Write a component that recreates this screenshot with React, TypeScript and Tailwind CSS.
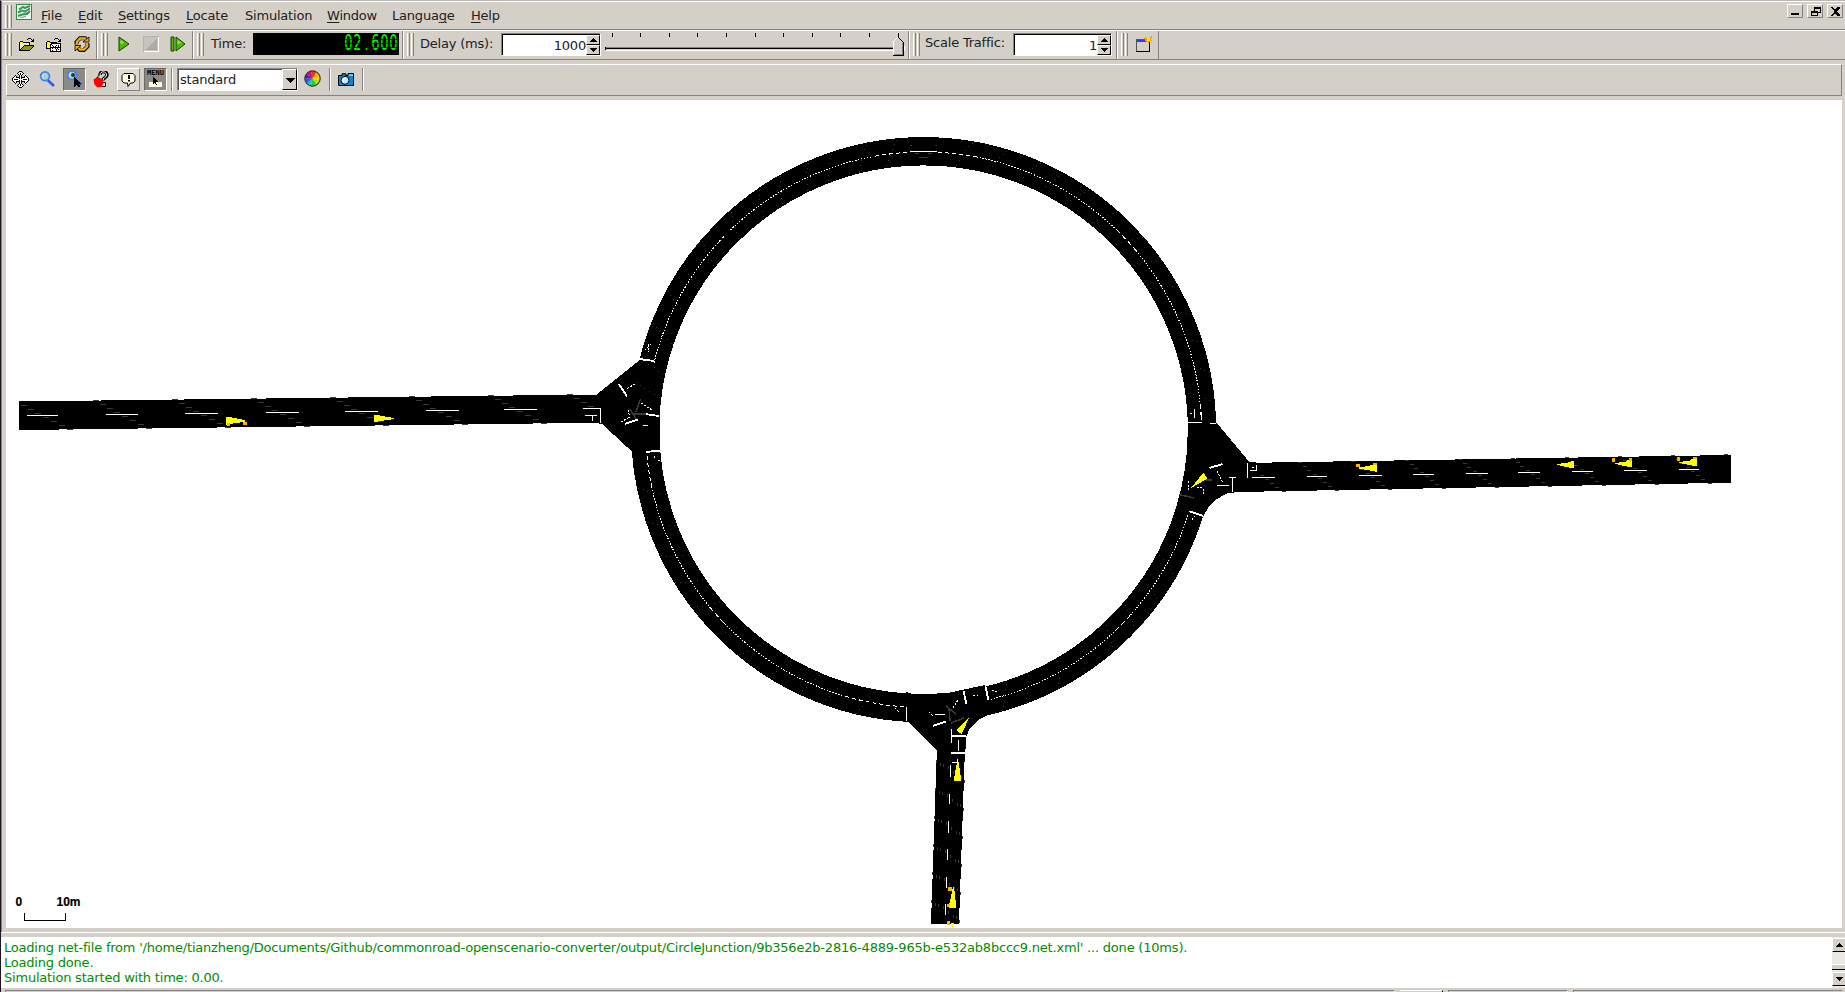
import React from "react";

type Pt = [number, number];

const BlackLine = "#000";
const DARK = "#3a3a3a";

function Grip({ className = "" }: { className?: string }) {
  return (
    <div className={`flex h-[23px] w-[7px] shrink-0 justify-between ${className}`}>
      <div className="w-[3px] border-l border-r border-l-white border-r-[#848284]" />
      <div className="w-[3px] border-l border-r border-l-white border-r-[#848284]" />
    </div>
  );
}

function Divider({ className = "" }: { className?: string }) {
  return <div className={`w-[2px] shrink-0 border-l border-r border-l-[#848284] border-r-white ${className}`} />;
}

function Pixels({ rows, colors, className = "" }: { rows: string[]; colors: Record<string, string>; className?: string }) {
  const w = Math.max(...rows.map((r) => r.length));
  return (
    <svg width={w} height={rows.length} viewBox={`0 0 ${w} ${rows.length}`} shapeRendering="crispEdges" className={`block shrink-0 ${className}`}>
      {rows.flatMap((r, y) =>
        r.split("").map((c, x) => (colors[c] ? <rect key={`${x}-${y}`} x={x} y={y} width="1" height="1" fill={colors[c]} /> : null)),
      )}
    </svg>
  );
}

const OPEN_ROWS = [
  "          ###   ",
  "         #   # #",
  "              ##",
  "  ###        ###",
  " #yyy#######    ",
  " #ywywywywy#    ",
  " #wywywywyw#    ",
  " #ywyw##########",
  " #wyw#ooooooooo#",
  " #yw#ooooooooo# ",
  " #w#ooooooooo#  ",
  " ##ooooooooo#   ",
  " ###########    ",
];
const NET_ROWS = [
  "          ###   ",
  "         #   # #",
  "              ##",
  "  ###        ###",
  " #yyy#######    ",
  " #ywyw##########",
  " #wyw##wwwwwwww#",
  " #ywy#w#www#w#w#",
  " #wyw#ww#w#ww#w#",
  " #ywy###########",
  " #####w#ww#w#ww#",
  "     #wwwww#w#w#",
  "     #w#www#www#",
  "     ###########",
];
const MOVE_ROWS = [
  "       ###       ",
  "      #www#      ",
  "     #ww#ww#     ",
  "      #w#w#      ",
  "   #   #w#   #   ",
  "  #w#  #w#  #w#  ",
  " #ww####w####ww# ",
  "#wwwwww#w#wwwwww#",
  "#w####wwwww####w#",
  "#wwwwww#w#wwwwww#",
  " #ww####w####ww# ",
  "  #w#  #w#  #w#  ",
  "   #   #w#   #   ",
  "      #w#w#      ",
  "     #ww#ww#     ",
  "      #www#      ",
  "       ###       ",
];
const CURSOR_ROWS = [
  "#       ",
  "##      ",
  "###     ",
  "####    ",
  "#####   ",
  "######  ",
  "#######  ",
  "#####   ",
  "## ###  ",
  "#   ##  ",
];

function Recalc() {
  return (
    <svg width="16" height="16" viewBox="0 0 16 16" className="block shrink-0">
      <path d="M2.5 8.5V6L6 2.2h5l2.5 3M13.5 7v3.5L10 14H6L3 11" fill="none" stroke="#000" strokeWidth="4" />
      <path d="M2.8 8.5V6L6 2.5h5l2.2 2.7M13.2 7v3.3L10 13.5H6L3.4 11" fill="none" stroke="#f0ac18" strokeWidth="2.3" />
      <path d="M9 6h6V1zM7 9.5H1V15z" fill="#f0ac18" stroke="#000" strokeWidth=".8" />
    </svg>
  );
}

function Magnifier() {
  return (
    <svg width="17" height="17" viewBox="0 0 17 17" className="block shrink-0">
      <path d="M8.500 9l6.500 6" stroke="#315bea" strokeWidth="2.7" />
      <circle cx="6" cy="5.3" r="4.4" fill="#a9cfd3" stroke="#3d82f5" strokeWidth="1.8" />
      <path d="M3.8 6.5V4.2L5.5 3" stroke="#d9eef0" fill="none" />
    </svg>
  );
}

function Spin({ value, width }: { value: string; width: string }) {
  return (
    <div className={`flex h-[23px] shrink-0 border-t border-l border-r border-b border-t-[#848284] border-l-[#848284] border-r-white border-b-white bg-white ${width}`}>
      <div className="flex h-[21px] flex-1 items-center justify-end border-t border-l border-black leading-none text-[#222]">{value}</div>
      <div className="flex w-[14px] flex-col border-t border-black">
        {["M3 6h8L7 2z", "M3 2h8L7 6z"].map((d) => (
          <div key={d} className="h-[10px] w-[14px] border-t border-l border-r border-b border-t-white border-l-white border-r-black border-b-black bg-[#d4d0c8]">
            <svg width="12" height="8" viewBox="1 0 12 8" shapeRendering="crispEdges" className="block">
              <path d={d} />
            </svg>
          </div>
        ))}
      </div>
    </div>
  );
}

const MENUS: [string, string, string, string][] = [
  ["", "F", "ile", "w-[37px]"],
  ["", "E", "dit", "w-[40px]"],
  ["", "S", "ettings", "w-[68px]"],
  ["", "L", "ocate", "w-[59px]"],
  ["Simulation", "", "", "w-[82px]"],
  ["", "W", "indow", "w-[65px]"],
  ["Langua", "g", "e", "w-[79px]"],
  ["", "H", "elp", "w-[60px]"],
];

function MenuBar() {
  return (
    <div className="flex h-[29px] border-t border-b border-t-white border-b-[#848284] pl-[3px]">
      <Grip className="mt-[3px]" />
      <svg width="16" height="16" viewBox="0 0 16 16" className="mt-[2px] ml-[4px] block shrink-0">
        <rect x=".5" y=".5" width="15" height="15" fill="#f4f8f2" stroke="#2e8b45" />
        <path d="M3 5.500L7 3l2 1 5-2M2 8.500l4-2 3 1 5-3M2 12l4-1.500 5-.5 3-3" fill="none" stroke="#3d8f50" strokeWidth="2" />
        <path d="M4 13.500l6-1M5 7l6 2" fill="none" stroke="#6fae7c" strokeWidth="1.200" />
      </svg>
      <div className="ml-[9px] flex pt-[4px]">
        {MENUS.map(([a, u, b, w]) => (
          <div key={a + u + b} className={`h-[20px] leading-[19px] whitespace-nowrap ${w}`}>
            {a}
            <span className="underline decoration-1 underline-offset-2">{u}</span>
            {b}
          </div>
        ))}
      </div>
      <div className="mt-[2px] mr-[2px] ml-auto flex gap-[4px]">
        {["M4 9h8v2H4z", "M7 3h7v6h-3v3H4V7h3zM8 5v2h3v1h2V5zM5 9v2h5V9z", "M4 3h2l2 3 2-3h3v1l-3 3v1l3 3v1h-3L8 9l-2 3H4v-1l3-3V7L4 4z"].map((d) => (
          <div key={d} className="h-[14px] w-[16px] border-t border-l border-r border-b border-t-white border-l-white border-r-[#848284] border-b-[#848284]">
            <svg width="14" height="12" viewBox="1 1 14 12" shapeRendering="crispEdges" className="block">
              <path d={d} fillRule="evenodd" />
            </svg>
          </div>
        ))}
      </div>
    </div>
  );
}

function MainBar() {
  return (
    <div className="flex h-[30px] border-t border-b border-t-white border-b-[#848284]">
      <div className="flex h-[29px] w-[1157px] shrink-0 border-r border-b border-[#848284] pt-[2px] pl-[3px]">
        <Grip />
        <Pixels rows={OPEN_ROWS} colors={{ "#": "#000", y: "#ffef10", w: "#fffce0", o: "#94920a" }} className="mt-[5px] ml-[6px]" />
        <Pixels rows={NET_ROWS} colors={{ "#": "#000", y: "#ffef10", w: "#ffffff" }} className="mt-[5px] ml-[11px]" />
        <div className="mt-[3px] ml-[13px]"><Recalc /></div>
        <Divider className="-mt-[2px] ml-[6px]" />
        <Grip className="ml-[3px]" />
        <svg width="12" height="16" viewBox="0 0 12 16" className="mt-[3px] ml-[10px] block shrink-0">
          <path d="M1 1l10 7-10 7z" fill="#50b800" stroke="#153c00" />
          <path d="M2.5 4v4l4-1z" fill="#9be84c" />
        </svg>
        <svg width="16" height="16" viewBox="0 0 16 16" shapeRendering="crispEdges" className="mt-[3px] ml-[13px] block shrink-0">
          <rect x=".5" y=".5" width="15" height="15" fill="#c6c3bd" stroke="#fff" />
          <path d="M14 2v12H2z" fill="#adaaa5" />
          <path d="M0 0h16v1H1v15H0z" fill="#b5b2ad" />
        </svg>
        <svg width="16" height="16" viewBox="0 0 16 16" className="mt-[3px] ml-[11px] block shrink-0">
          <path d="M1 1h3v14H1zM6 1l9 7-9 7z" fill="#50b800" stroke="#153c00" />
          <path d="M7.500 4v4l4-1z" fill="#9be84c" />
        </svg>
        <Divider className="-mt-[2px] ml-[6px]" />
        <Grip className="ml-[3px]" />
        <div className="ml-[7px] w-[42px] leading-[22px]">Time:</div>
        <div className="relative flex h-[22px] w-[146px] shrink-0 justify-end bg-black">
          <div className="mt-[3px] mr-[1px] flex h-[16px] origin-top scale-y-[1.600] text-[13px] leading-[10px] tracking-normal text-[#00f800]">
            {"02.600".split("").map((c, i) => (
              <span key={i} className="w-[9px] text-center">{c}</span>
            ))}
          </div>
          <div className="absolute top-[3px] right-[1px] h-[16px] w-[54px] bg-[repeating-linear-gradient(to_bottom,transparent_0_3px,#000_3px_4px)] opacity-70" />
        </div>
        <Divider className="-mt-[2px] ml-[3px]" />
        <Grip className="ml-[3px]" />
        <div className="ml-[6px] w-[81px] leading-[22px]">Delay (ms):</div>
        <Spin value="1000" width="w-[100px]" />
        <svg width="302" height="25" viewBox="603 33 302 25" shapeRendering="crispEdges" className="ml-[2px] block shrink-0">
          {[612, 640, 669, 697, 726, 755, 783, 812, 840, 869, 898].map((x) => (
            <rect key={x} x={x} y="33" width="1" height="4" />
          ))}
          <path d="M605 47h293v1H605z" fill="#848284" />
          <path d="M606 48h292v1H606zM605 47h1v3h-1z" fill={BlackLine} />
          <path d="M606 50h298v-4h1v5H606z" fill="#fff" />
          <path d="M893 55V42l5-5 5 5v13z" fill="#d4d0c8" />
          <path d="M893 55V42l5-5" fill="none" stroke="#fff" />
          <path d="M898 37l5 5v13.500h-10" fill="none" stroke="#000" />
          <path d="M902 43h1v12h-9v-1h8z" fill="#848284" />
        </svg>
        <Divider className="-mt-[2px] ml-[3px]" />
        <Grip className="ml-[3px]" />
        <div className="ml-[5px] w-[88px] leading-[19px] whitespace-nowrap">Scale Traffic:</div>
        <Spin value="1" width="w-[99px]" />
        <Divider className="-mt-[2px] ml-[4px]" />
        <Grip className="ml-[3px]" />
        <svg width="17" height="17" viewBox="0 0 17 17" shapeRendering="crispEdges" className="mt-[3px] ml-[7px] block shrink-0">
          <rect x="1.500" y="3.500" width="13" height="12" fill="#d4d0c8" stroke="#555" />
          <path d="M1 15h14v1H1zM14 5h1v11h-1z" />
          <path d="M2 4h9v2H2z" fill="#3136ff" />
          <path d="M10 1h1v1h1v1h3V1h1V0h1v2h-1v2h1v1h-2v1h-1v1h-1V6h-2V5h-1V3h-1z" fill="#ff9a00" />
          <path d="M12 2h3v3h-3z" fill="#fff200" />
        </svg>
      </div>
    </div>
  );
}

function ViewBar() {
  return (
    <div className="mt-[4px] ml-[4px] flex h-[32px] w-[1836px] items-start border-t border-l border-r border-b border-t-white border-l-white border-r-[#848284] border-b-[#848284] pt-[3px]">
      <Pixels rows={MOVE_ROWS} colors={{ "#": "#000", w: "#fff" }} className="mt-[3px] ml-[5px]" />
      <div className="mt-[3px] ml-[10px]"><Magnifier /></div>
      <div className="relative ml-[7px] h-[23px] w-[23px] border-t border-l border-r border-b border-t-[#6b6963] border-l-[#6b6963] border-r-white border-b-white bg-[#8c8a85] pt-[1px] pl-[2px]">
        <Magnifier />
        <div className="absolute top-[8px] left-[10px]"><Pixels rows={CURSOR_ROWS} colors={{ "#": "#000" }} /></div>
        <div className="absolute top-[4px] left-[7px] h-[4px] w-[4px] rounded-full bg-[#26323c]" />
      </div>
      <svg width="16" height="17" viewBox="0 0 16 17" className="mt-[3px] ml-[7px] block shrink-0">
        <path d="M7 4c0-5 7-4 7 0 0 3-4 2-4 5.500" fill="none" stroke="#000" strokeWidth="3.500" />
        <path d="M7 4c0-4.500 6.500-4 6.500 0 0 3-3.500 2-3.500 5" fill="none" stroke="#fff" strokeWidth="1" />
        <path d="M8.500 11.500h4v4h-4z" fill="#fff" stroke="#000" />
        <path d="M.5 8.500l4-2.500 5 2 1 4-2 4-4 .5-3-3z" fill="#ff0000" />
        <path d="M4 7l1-2 2-1" stroke="#000" strokeWidth=".8" fill="none" />
      </svg>
      <div className="ml-[8px] h-[23px] w-[23px] border-t border-l border-r border-b border-t-white border-l-white border-r-[#848284] border-b-[#848284] bg-[#dedbd6] pt-[3px] pl-[3px]">
        <svg width="16" height="16" viewBox="0 0 16 16" className="block">
          <path d="M3 1.500h9l2 2V9l-2 2H9.500L7 14.500 6.500 11H3L1 9V3.500z" fill="#ffffe1" stroke="#000" />
          <path d="M7 3h2v4H7zM7 8h2v1.600H7z" />
        </svg>
      </div>
      <div className="relative ml-[4px] h-[23px] w-[23px] border-t border-l border-r border-b border-t-[#6b6963] border-l-[#6b6963] border-r-white border-b-white bg-[#8c8a85]">
        <svg width="21" height="21" viewBox="0 0 21 21" shapeRendering="crispEdges" className="block">
          <path d="M4 13h13v5H4z" fill="#ffffe1" />
          <path d="M8 8l5 5h-2l1 3h-1l-1-2-2 1z" />
        </svg>
        <div className="absolute top-0 left-[2px] w-[18px] font-['DejaVu_Sans_Mono'] text-[7px] leading-[8px] font-bold tracking-normal text-black">MENU</div>
      </div>
      <Divider className="ml-[4px] h-[23px]" />
      <div className="ml-[4px] flex h-[23px] w-[121px] border-t border-l border-r border-b border-t-[#848284] border-l-[#848284] border-r-white border-b-white bg-white">
        <div className="w-[105px] border-t border-l border-[#55534f] pl-[1px] leading-[20px]">standard</div>
        <div className="h-[21px] w-[15px] border-t border-l border-r border-b border-t-white border-l-white border-r-black border-b-black bg-[#d4d0c8]">
          <svg width="13" height="19" viewBox="0 0 13 19" shapeRendering="crispEdges" className="block">
            <path d="M2 8h10l-5 5z" />
          </svg>
        </div>
      </div>
      <svg width="17" height="17" viewBox="-8.500 -8.500 17 17" className="mt-[2px] ml-[6px] block shrink-0">
        {["#ffb010", "#ffd700", "#9be010", "#00e030", "#20c0c0", "#2060f0", "#5020c0", "#d01060", "#ff2a10"].map((c, i, all) => {
          const at = (k: number): Pt => {
            const t = ((k / all.length) * 360 - 60) * (Math.PI / 180);
            return [7.5 * Math.cos(t), 7.5 * Math.sin(t)];
          };
          const [a, b] = [at(i), at(i + 1)];
          return <path key={c} d={`M0 0L${a[0]} ${a[1]}A7.5 7.5 0 0 1 ${b[0]} ${b[1]}z`} fill={c} />;
        })}
        <circle r="7.700" fill="none" stroke="#111" strokeWidth="1" />
      </svg>
      <Divider className="ml-[8px] h-[23px]" />
      <svg width="16" height="13" viewBox="0 0 16 13" className="mt-[5px] ml-[7px] block shrink-0">
        <path d="M.5 2.500H4V.8h4v1.700h2V.5h5.500v12H.5z" fill="#1585c9" stroke="#000" />
        <path d="M11 1h4v2h-4z" fill="#63c8f5" />
        <circle cx="7" cy="7.300" r="4" fill="#bce8fa" stroke="#000" />
        <path d="M5 9V6l3-1" stroke="#fff" strokeWidth="1.500" fill="none" />
      </svg>
      <Divider className="ml-[8px] h-[23px]" />
    </div>
  );
}

const CX = 923.6;
const CY = 429.7;
const onRing = (deg: number, r: number): Pt => {
  const t = (deg * Math.PI) / 180;
  return [CX + r * Math.cos(t), CY + r * Math.sin(t)];
};
const arc = (from: number, to: number, r: number) => {
  const a = onRing(from, r);
  const b = onRing(to, r);
  return `M${a[0]} ${a[1]}A${r} ${r} 0 ${to - from > 180 ? 1 : 0} 1 ${b[0]} ${b[1]}`;
};

const WEST_MARKS: Pt[] = [[14, 401], [21, 405], [28, 409], [35, 413], [43, 417], [51, 421], [59, 425], [67, 429]];
const EAST_MARKS: Pt[] = [[1298, 462], [1303, 466], [1307, 470], [1313, 474], [1318, 478], [1323, 482], [1328, 486], [1335, 490]];
const SOUTH_MARKS: Pt[] = [[934, 816], [938, 819], [941, 820], [946, 822], [951, 827], [956, 831], [959, 832], [962, 836]];
const WEST_DASHES = [[27, 58, 415], [106, 138, 414], [185, 218, 413], [266, 299, 412], [345, 378, 411], [426, 459, 410], [504, 537, 409], [583, 601, 408]];
const EAST_DASHES = [[1252, 1275, 477], [1307, 1327, 476], [1359, 1382, 475], [1413, 1434, 474], [1466, 1488, 473], [1518, 1540, 472], [1572, 1593, 471], [1624, 1647, 470], [1679, 1699, 469]];
const SOUTH_DASHES = [[950, 765, 777], [949, 794, 804], [948, 821, 833], [947, 849, 860], [946, 877, 888], [945, 904, 915]];
const RING_MARKS = [187, 192, 199, 206, 212, 218, 226, 233, 238, 244, 249, 256, 262, 277, 284, 291, 296, 302, 309, 316, 322, 328, 334, 340, 346, 352, 28, 34, 41, 47, 54, 60, 67, 72, 101, 108, 113, 120, 127, 133, 140, 146, 152, 159, 166];

function Network() {
  return (
    <svg width="1836" height="828" viewBox="6 100 1836 828" shapeRendering="crispEdges" className="block">
      <circle cx={CX} cy={CY} r="278.400" fill="none" stroke="#000" strokeWidth="28.400" />
      <path d="M19 401.500L597 394.500V422.700L19 430z" />
      <path d="M1254 462.800L1731 455V482.700L1238 492z" />
      <path d="M937 748H965L959 923.500H931z" />
      <path d="M596 395L639 360.500L667 362L660 400V452H632.500L602 424L596 423z" />
      <path d="M1188 422H1216L1249 461.500L1260 463V491.500L1240 492L1228 493L1215 500L1208 508L1203.500 516L1175 513L1181 490L1187 463L1188 440z" />
      <path d="M906 692L912 693.800H944L985 685L988 715L978 720L970 728L966.500 736L965 755H937V751L908 722z" />

      <g fill={DARK}>
        {[0, 1, 2, 3, 4, 5, 6, 7].flatMap((k) =>
          WEST_MARKS.map(([x, y]) => (x + k * 79 < 592 && x + k * 79 > 18 ? <rect key={`${k}-${x}`} x={x + k * 79} y={y - k} width="6" height="1" /> : null)),
        )}
        {[-1, 0, 1, 2, 3, 4, 5, 6, 7, 8].flatMap((k) =>
          EAST_MARKS.map(([x, y]) => (x + k * 53.3 < 1726 && x + k * 53.3 > 1255 ? <rect key={`${k}-${x}`} x={Math.round(x + k * 53.3)} y={y - k} width="4" height="1" /> : null)),
        )}
        {[-2, -1, 0, 1, 2, 3].flatMap((k) =>
          SOUTH_MARKS.map(([x, y]) => (y + k * 28 > 756 ? <rect key={`${k}-${x}`} x={x - k} y={y + k * 28} width="1" height="3" /> : null)),
        )}
        {RING_MARKS.flatMap((deg) =>
          [267, 272, 277, 283, 287, 291].map((r, i) => {
            const [x, y] = onRing(deg + i * 0.5, r);
            return <rect key={`${deg}-${r}`} x={Math.round(x)} y={Math.round(y)} width="1" height="1" />;
          }),
        )}
        <path d="M910 145h2v1h-2zM935 145h2v1h-2zM915 153h4v1h-4zM928 153h4v1h-4zM919 157h9v1h-9z" />
      </g>

      <g fill="#fff">
        {WEST_DASHES.map(([a, b, y]) => <rect key={a} x={a} y={y} width={b - a} height="1" />)}
        {EAST_DASHES.map(([a, b, y]) => <rect key={a} x={a} y={y} width={b - a} height="1" />)}
        {SOUTH_DASHES.map(([x, a, b]) => <rect key={a} x={x} y={a} width="1" height={b - a} />)}
        <path d="M910 151h27v1h-27zM920 165h6v1h-6z" />
      </g>

      <g fill="none" stroke="#fff">
        <path d={`${arc(194, 222, 277.8)}${arc(226, 259, 277.8)}`} strokeDasharray="1.500 1.500" />
        <path d={`${arc(260, 267, 277.8)}${arc(273, 281, 277.8)}`} strokeDasharray="4 3" />
        <path d={`${arc(281, 314, 277.8)}${arc(320, 355, 277.8)}`} strokeDasharray="1.500 1.500" />
        <path d={`${arc(314, 320, 277.8)}${arc(222, 224, 277.8)}${arc(136, 140, 277.8)}${arc(42, 46, 277.8)}`} strokeDasharray="5 3" />
        <path d={`${arc(18, 42, 277.8)}${arc(46, 76, 277.8)}${arc(107, 136, 277.8)}${arc(140, 168, 277.8)}`} strokeDasharray="1.500 1.500" />
        <path d={`${arc(94, 107, 277.8)}${arc(168, 175, 277.8)}${arc(355, 358, 277.8)}`} strokeDasharray="4 3" />
        <path d="M627 388.500l9-5M621 422l9-5 M628 410l2 8M641 403l11 7M1217 471l6 12M953 708l5-8M929 712l5 5M1188 481v10M1197 487l6 1v6M645 350l6-6 M648 344v8M895 708l5 5M973 695h5M992 690l5 2M1192 520l3-4M654 456v4M658 460h2" strokeDasharray="2 1.500" />
        <path d="M639 359l15 2M619 384l8 12.500M645 414l14 2M625 424l13-4.500M646 452l14-1.500M1187 422.500h15M1209.500 468l13-4M1189.500 511.500l13.500 4.500M963.500 691l3 13.500M985.500 687l3 13M933 726l13.500-4.500M906.500 706.500v14.500M951 736h15M951 753h15M1247.500 463v14.500" strokeWidth="1.900" />
        <path d="M600.500 408v15M585 415.500h12M592.500 416v5M1210 423.500h6M1194.500 409v9M1201.500 412v7M1190 413h2M1232.500 477v15M1229 477.500h7M1217 485.500h12M1250 470.500h7M1256.500 465v6M1252 467h2M951.500 729v14M958.500 740v11M950.500 765v12M952 762.500h6M957.500 759v3M643 425.500h5M935 714.500h10" />
      </g>

      <g fill="none" stroke={DARK} strokeWidth="1.500">
        <path d="M640.500 399l-4.500 13M632 414h14M630 409l6 10M1179 494.500l15 3.500M1206 480h6M946 706l10 8M949 708l1 13M951 723l13-5" />
      </g>

      <g fill="#ff0">
        <path d="M226 417h3l16 3v2l-10 1-9 2zM374 415h3l17 3v1l-14 2-6 1.500z" />
        <path d="M1356 468l12-2 6-2 2.500-1 .5 9-4-1zM1555 464l12-1 5-2h1.700v7h-2l-10-2zM1613 463l12-1 5-3h2v8h-3l-10-2zM1677 462l12-1 5-3h3v8h-3l-10-2z" />
        <path d="M1191 488l12.500-15.500 4 6zM970 716l-14 14 5.500 4zM957 762h1.500l3 19h-8zM953 887h1l2.500 21h-8zM951 923h2.500v5h-1.500z" />
      </g>
      <g fill="#ffb400">
        <path d="M227 423h3v3h-3zM243 422h4v3h-4zM1356 464h4v3h-4zM1373 463h4v2h-4zM1612 458h3v4h-3zM1629 458h3v3h-3zM1677 457h3v4h-3zM1693 457h4v2h-4zM948 887h4v4h-4zM947 904h3v3h-3zM947 921h3v4h-3z" />
      </g>

      <path d="M24.500 913v7.500h41V913" fill="none" stroke="#000" />
      <g fontFamily="Liberation Sans" fontWeight="bold" fontSize="12" letterSpacing="0" strokeWidth=".2" stroke="#000">
        <text x="15.500" y="906">0</text>
        <text x="56.500" y="906">10m</text>
      </g>
    </svg>
  );
}

function ScrollButton({ d }: { d: string }) {
  return (
    <div className="h-[14px] w-[13px] border-t border-l border-b border-t-white border-l-white border-b-black bg-[#d4d0c8]">
      <svg width="12" height="12" viewBox="0 0 12 12" shapeRendering="crispEdges" className="block">
        <path d={d} />
      </svg>
    </div>
  );
}

export default function App() {
  return (
    <div className="flex h-[992px] w-[1845px] flex-col overflow-hidden border-t border-l border-t-[#bab7b9] border-l-[#1c1420] bg-[#d4d0c8] font-['DejaVu_Sans','Verdana',sans-serif] text-[13px] tracking-[-0.205px] text-[#222]">
      <div className="flex h-[931px] flex-col border-l border-[#848284]">
        <MenuBar />
        <MainBar />
        <ViewBar />
        <div className="mt-[4px] ml-[4px] h-[828px] w-[1836px] bg-white">
          <Network />
        </div>
      </div>
      <div className="h-px shrink-0 bg-white" />
      <div className="mt-[4px] flex h-[51px] shrink-0 bg-white">
        <div className="flex-1 pt-[3px] pl-[3px] leading-[15px] text-[#008c00]">
          <div>Loading net-file from '/home/tianzheng/Documents/Github/commonroad-openscenario-converter/output/CircleJunction/9b356e2b-2816-4889-965b-e532ab8bccc9.net.xml' ... done (10ms).</div>
          <div>Loading done.</div>
          <div>Simulation started with time: 0.00.</div>
        </div>
        <div className="flex w-[13px] flex-col bg-[#ebe9e5] pt-px">
          <ScrollButton d="M2 8h8L6 4z" />
          <div className="h-[12px]" />
          <div className="mb-[2px] h-[6px] border-t border-b border-t-white border-b-black bg-[#d4d0c8]" />
          <ScrollButton d="M2 4h8L6 8z" />
        </div>
      </div>
      <div className="flex h-[4px] shrink-0 gap-[5px] pt-[2px] pl-[4px]">
        <div className="w-[1390px] border-t border-l border-r border-[#848284] border-r-white" />
        <div className="w-[43px] border-t border-r border-t-white border-r-black" />
        <div className="w-[120px] border-t border-l border-r border-[#848284] border-r-white" />
        <div className="w-[269px] border-t border-l border-[#848284]" />
      </div>
    </div>
  );
}
